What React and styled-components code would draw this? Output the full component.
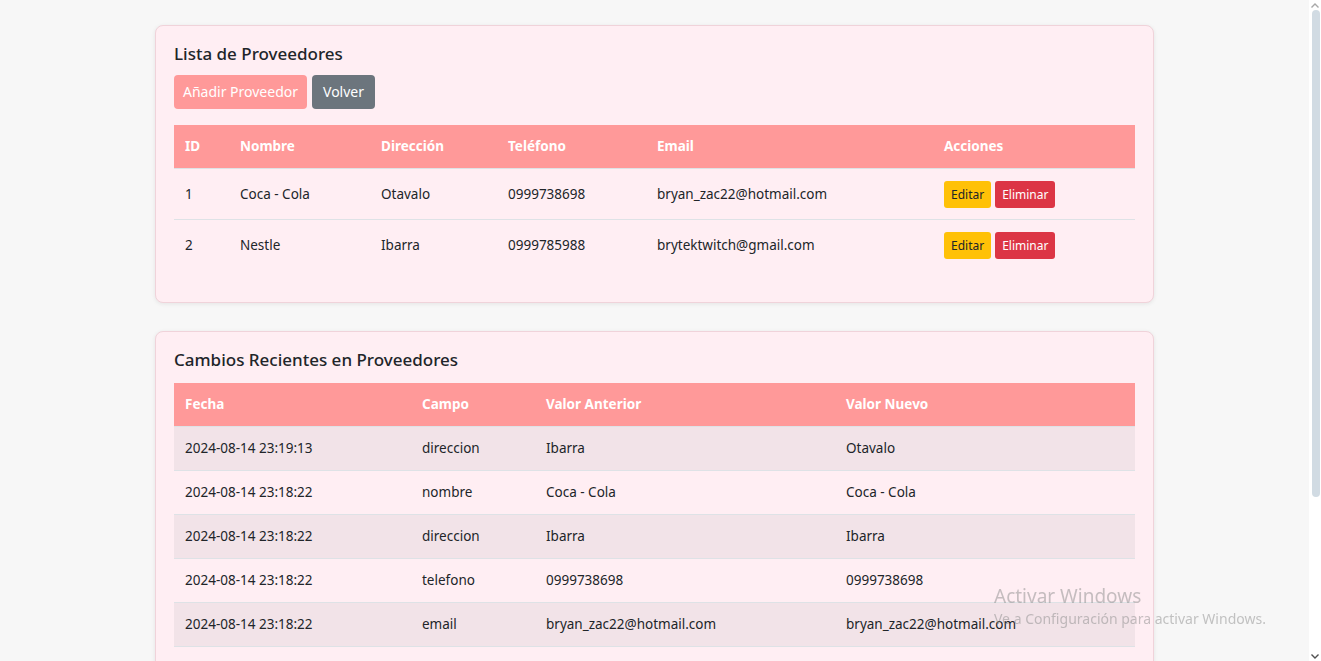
import styled, { createGlobalStyle } from 'styled-components';

const proveedores = [
  { id: 1, nombre: 'Coca - Cola', direccion: 'Otavalo', telefono: '0999738698', email: 'bryan_zac22@hotmail.com' },
  { id: 2, nombre: 'Nestle', direccion: 'Ibarra', telefono: '0999785988', email: 'brytektwitch@gmail.com' },
];

const cambios = [
  { fecha: '2024-08-14 23:19:13', campo: 'direccion', anterior: 'Ibarra', nuevo: 'Otavalo' },
  { fecha: '2024-08-14 23:18:22', campo: 'nombre', anterior: 'Coca - Cola', nuevo: 'Coca - Cola' },
  { fecha: '2024-08-14 23:18:22', campo: 'direccion', anterior: 'Ibarra', nuevo: 'Ibarra' },
  { fecha: '2024-08-14 23:18:22', campo: 'telefono', anterior: '0999738698', nuevo: '0999738698' },
  { fecha: '2024-08-14 23:18:22', campo: 'email', anterior: 'bryan_zac22@hotmail.com', nuevo: 'bryan_zac22@hotmail.com' },
];

const GlobalStyle = createGlobalStyle`
  html, body {
    margin: 0;
    padding: 0;
    height: 100%;
    overflow: hidden;
  }
  body {
    font-family: "Noto Sans", "Open Sans", sans-serif;
    color: #212529;
    background: #f7f7f7;
  }
`;

const App = () => {
  return (
    <Screen>
      <GlobalStyle />
      <Viewport>
        <Container>
          <Card>
            <CardTitle>Lista de Proveedores</CardTitle>
            <ButtonRow>
              <Button variant="primary">Añadir Proveedor</Button>
              <Button variant="secondary" wide>Volver</Button>
            </ButtonRow>
            <Table>
              <colgroup>
                <col style={{ width: 55 }} />
                <col style={{ width: 141 }} />
                <col style={{ width: 127 }} />
                <col style={{ width: 149 }} />
                <col style={{ width: 287 }} />
                <col style={{ width: 202 }} />
              </colgroup>
              <thead>
                <tr>
                  <Th>ID</Th>
                  <Th>Nombre</Th>
                  <Th>Dirección</Th>
                  <Th>Teléfono</Th>
                  <Th>Email</Th>
                  <Th>Acciones</Th>
                </tr>
              </thead>
              <tbody>
                {proveedores.map((p, i) => {
                  const last = i === proveedores.length - 1;
                  return (
                    <tr key={p.id}>
                      <Td tall last={last}>{p.id}</Td>
                      <Td tall last={last}>{p.nombre}</Td>
                      <Td tall last={last}>{p.direccion}</Td>
                      <Td tall last={last}>{p.telefono}</Td>
                      <Td tall last={last}>{p.email}</Td>
                      <Td tall last={last}>
                        <Actions>
                          <SmallButton variant="warning">Editar</SmallButton>
                          <SmallButton variant="danger">Eliminar</SmallButton>
                        </Actions>
                      </Td>
                    </tr>
                  );
                })}
              </tbody>
            </Table>
          </Card>

          <Card>
            <CardTitle spaced>Cambios Recientes en Proveedores</CardTitle>
            <Table>
              <colgroup>
                <col style={{ width: 237 }} />
                <col style={{ width: 124 }} />
                <col style={{ width: 300 }} />
                <col style={{ width: 300 }} />
              </colgroup>
              <thead>
                <tr>
                  <Th>Fecha</Th>
                  <Th>Campo</Th>
                  <Th>Valor Anterior</Th>
                  <Th>Valor Nuevo</Th>
                </tr>
              </thead>
              <tbody>
                {cambios.map((c, i) => (
                  <StripedRow key={i} striped={i % 2 === 0}>
                    <Td>{c.fecha}</Td>
                    <Td>{c.campo}</Td>
                    <Td>{c.anterior}</Td>
                    <Td>{c.nuevo}</Td>
                  </StripedRow>
                ))}
              </tbody>
            </Table>
          </Card>
        </Container>
      </Viewport>
      <Scrollbar>
        <ScrollArrow>
          <svg width="8" height="5" viewBox="0 0 8 5"><path d="M0.5 4.5 L4 1 L7.5 4.5" fill="none" stroke="#a8a8a8" strokeWidth="1.4" /></svg>
        </ScrollArrow>
        <ScrollTrack>
          <ScrollThumb />
        </ScrollTrack>
        <ScrollArrow>
          <svg width="8" height="5" viewBox="0 0 8 5"><path d="M0.5 0.5 L4 4 L7.5 0.5" fill="none" stroke="#505050" strokeWidth="1.4" /></svg>
        </ScrollArrow>
      </Scrollbar>
      <Watermark>
        <WatermarkTitle>Activar Windows</WatermarkTitle>
        <WatermarkText>Ve a Configuración para activar Windows.</WatermarkText>
      </Watermark>
    </Screen>
  );
};

const Screen = styled.div`
  display: flex;
  height: 100vh;
  width: 100vw;
  overflow: hidden;
`;

const Viewport = styled.div`
  flex: 1;
  overflow: hidden;
`;

const Container = styled.div`
  width: 999px;
  margin: 0 auto;
  padding-top: 25px;
  display: flex;
  flex-direction: column;
  gap: 28px;
`;

const Card = styled.div`
  background: #ffeef3;
  border: 1px solid #f0d3da;
  border-radius: 8px;
  box-shadow: 0 1px 4px rgba(0, 0, 0, 0.08);
  padding: 16px 18px 16px;
`;

const CardTitle = styled.h4`
  margin: 0 0 ${({ spaced }) => (spaced ? '11px' : '9px')};
  font-size: 17px;
  font-weight: 500;
  line-height: 24px;
  color: #212529;
`;

const ButtonRow = styled.div`
  display: flex;
  gap: 5px;
  margin-bottom: 16px;
`;

const buttonColors = {
  primary: { bg: '#ff9999', fg: '#fff' },
  secondary: { bg: '#6c757d', fg: '#fff' },
  warning: { bg: '#ffc107', fg: '#212529' },
  danger: { bg: '#dc3545', fg: '#fff' },
};

const Button = styled.button`
  font-family: inherit;
  font-size: 14px;
  line-height: 20px;
  padding: ${({ wide }) => (wide ? '7px 11px' : '7px 9px')};
  border: none;
  border-radius: 4px;
  background: ${({ variant }) => buttonColors[variant].bg};
  color: ${({ variant }) => buttonColors[variant].fg};
  cursor: pointer;
`;

const Actions = styled.div`
  display: flex;
  gap: 4px;
  padding-top: 2px;
`;

const SmallButton = styled.button`
  font-family: inherit;
  font-size: 12px;
  line-height: 17px;
  padding: 5px 7px;
  border: none;
  border-radius: 3px;
  background: ${({ variant }) => buttonColors[variant].bg};
  color: ${({ variant }) => buttonColors[variant].fg};
  cursor: pointer;
`;

const Table = styled.table`
  width: 100%;
  table-layout: fixed;
  border-collapse: collapse;
  font-size: 13.5px;
  margin-bottom: 16px;
`;

const Th = styled.th`
  background: #ff9999;
  color: #fff;
  font-weight: 700;
  text-align: left;
  height: 43px;
  padding: 0 11px;
  border-bottom: 1px solid #dee2e6;
  box-sizing: border-box;
`;

const Td = styled.td`
  height: ${({ tall }) => (tall ? '51px' : '44px')};
  padding: 0 11px;
  border-bottom: ${({ last }) => (last ? 'none' : '1px solid #dee2e6')};
  box-sizing: border-box;
  vertical-align: middle;
`;

const StripedRow = styled.tr`
  background: ${({ striped }) => (striped ? '#f2e3e8' : 'transparent')};
`;

const Scrollbar = styled.div`
  width: 12px;
  background: #fff;
  display: flex;
  flex-direction: column;
  align-items: center;
`;

const ScrollArrow = styled.div`
  height: 10px;
  display: flex;
  align-items: center;
  justify-content: center;
`;

const ScrollTrack = styled.div`
  flex: 1;
  width: 100%;
  padding: 0 1px 0 3px;
  box-sizing: border-box;
`;

const ScrollThumb = styled.div`
  height: 487px;
  background: #d1dbe3;
  border-radius: 4px;
`;

const Watermark = styled.div`
  position: fixed;
  left: 994px;
  top: 584px;
  color: rgba(140, 140, 140, 0.5);
  font-family: "Noto Sans", sans-serif;
  pointer-events: none;
`;

const WatermarkTitle = styled.div`
  font-size: 19px;
  line-height: 24px;
`;

const WatermarkText = styled.div`
  font-size: 14px;
  line-height: 20px;
  margin-top: 1px;
`;

export default App;
